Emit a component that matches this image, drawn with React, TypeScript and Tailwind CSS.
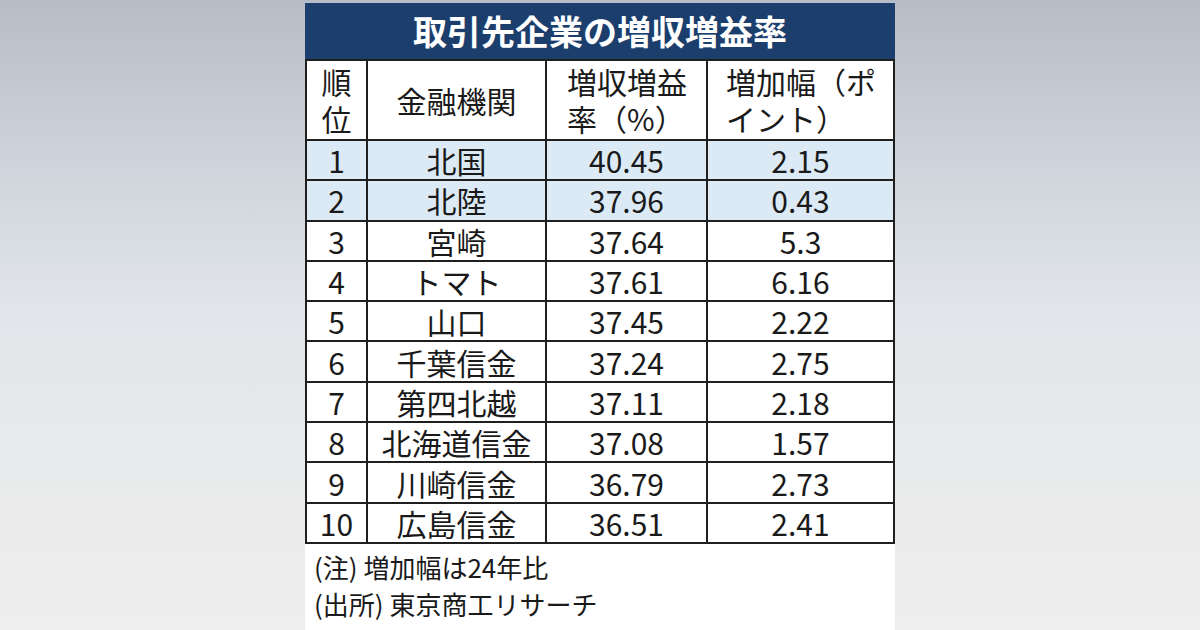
const rows: [string, string, string, string][] = [
  ["1", "北国", "40.45", "2.15"],
  ["2", "北陸", "37.96", "0.43"],
  ["3", "宮崎", "37.64", "5.3"],
  ["4", "トマト", "37.61", "6.16"],
  ["5", "山口", "37.45", "2.22"],
  ["6", "千葉信金", "37.24", "2.75"],
  ["7", "第四北越", "37.11", "2.18"],
  ["8", "北海道信金", "37.08", "1.57"],
  ["9", "川崎信金", "36.79", "2.73"],
  ["10", "広島信金", "36.51", "2.41"],
];

export default function App() {
  return (
    <div className="w-[1200px] h-[630px] overflow-hidden flex justify-center bg-[linear-gradient(180deg,#b6bdc6_0%,#cdd3da_25%,#e2e6ea_50%,#e9eaeb_75%,#eeeeee_100%)] font-['Noto_Sans_CJK_JP','Noto_Sans',sans-serif] text-[#1a1a1a]">
      <div className="w-[590px] mt-[3px] bg-white flex flex-col">
        <div className="h-[56px] bg-[#1b3e6d] flex items-center justify-center text-white font-bold text-[34px] leading-none">
          取引先企業の増収増益率
        </div>

        <div className="grid grid-cols-[59px_177px_159px_185px] grid-rows-[78px] auto-rows-[38.3px] gap-[2px] bg-[#1f1f1f] border-2 border-[#1f1f1f] text-[30px]">
          <div className="bg-white flex flex-col items-center justify-center leading-[37px]">
            <span>順</span>
            <span>位</span>
          </div>
          <div className="bg-white flex items-center justify-center leading-none">金融機関</div>
          <div className="bg-white flex items-center pl-[20px] leading-[37px]">
            <span>
              増収増益
              <br />
              率（%）
            </span>
          </div>
          <div className="bg-white flex items-center pl-[18px] leading-[37px]">
            <span>
              増加幅（ポ
              <br />
              イント）
            </span>
          </div>

          {rows.map(([rank, name, rate, diff], i) => {
            const bg = i < 2 ? "bg-[#dceaf6]" : "bg-white";
            return [
              <div key={`r${i}`} className={`${bg} flex items-center justify-center leading-none`}>
                {rank}
              </div>,
              <div key={`n${i}`} className={`${bg} flex items-center justify-center leading-none`}>
                {name}
              </div>,
              <div key={`p${i}`} className={`${bg} flex items-center justify-center leading-none`}>
                {rate}
              </div>,
              <div key={`d${i}`} className={`${bg} flex items-center justify-center leading-none`}>
                {diff}
              </div>,
            ];
          })}
        </div>

        <div className="pl-[9px] pt-[4px] text-[26px] leading-[37px] text-[#1a1a1a]">
          <p>(注) 増加幅は24年比</p>
          <p>(出所) 東京商工リサーチ</p>
        </div>
      </div>
    </div>
  );
}
